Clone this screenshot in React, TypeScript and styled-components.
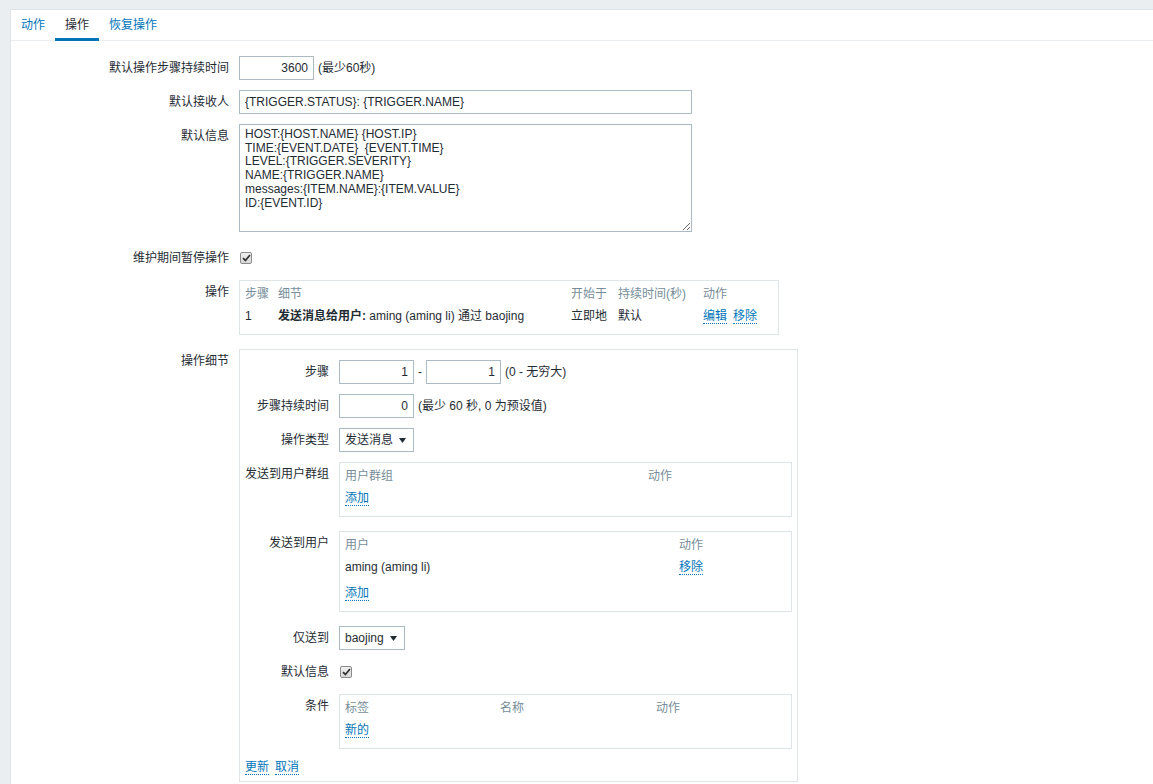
import React from 'react'
import styled, { createGlobalStyle } from 'styled-components'

const GlobalStyle = createGlobalStyle`
  body {
    margin: 0;
    background: #ebeef0;
    font-family: "Liberation Sans", Arial, "Noto Sans CJK SC", sans-serif;
    font-size: 12px;
    line-height: 14px;
    color: #1f2c33;
  }
`

const Panel = styled.div`
  margin: 9px 0 0 10px;
  min-height: 775px;
  background: #fff;
  border: 1px solid #dfe4e7;
  border-right: none;
  border-bottom: none;
  box-sizing: border-box;
`

const TabBar = styled.div`
  display: flex;
  height: 30px;
  border-bottom: 1px solid #ebeef0;
`

const Tab = styled.div<{ $active?: boolean }>`
  height: 31px;
  padding: 0 10px 1px;
  line-height: 30px;
  box-sizing: border-box;
  cursor: pointer;
  color: ${(p) => (p.$active ? '#1f2c33' : '#0275b8')};
  box-shadow: ${(p) => (p.$active ? 'inset 0 -3px 0 #0275b8' : 'none')};
`

const Form = styled.div`
  padding-top: 15px;
`

const FormRow = styled.div`
  display: flex;
  align-items: flex-start;
  margin-bottom: 10px;
`

const Label = styled.div<{ $width: number }>`
  flex: none;
  width: ${(p) => p.$width}px;
  padding: 5px 10px 0 0;
  box-sizing: border-box;
  text-align: right;
  white-space: nowrap;
`

const Field = styled.div<{ $tall?: boolean }>`
  display: flex;
  align-items: center;
  min-height: ${(p) => (p.$tall ? 24 : 0)}px;
`

const TextInput = styled.input<{ $width: number; $right?: boolean }>`
  width: ${(p) => p.$width}px;
  height: 24px;
  margin: 0;
  padding: 0 5px;
  box-sizing: border-box;
  border: 1px solid #acbbc2;
  background: #fff;
  font: inherit;
  color: #1f2c33;
  text-align: ${(p) => (p.$right ? 'right' : 'left')};
  outline: none;
`

const Hint = styled.span`
  margin-left: 4px;
  white-space: nowrap;
`

const Dash = styled.span`
  margin: 0 4px;
`

const TextArea = styled.textarea`
  display: block;
  width: 453px;
  height: 108px;
  margin: 0 0 4px;
  padding: 3px 5px;
  box-sizing: border-box;
  border: 1px solid #acbbc2;
  font-family: "Liberation Sans", Arial, sans-serif;
  font-size: 12px;
  line-height: 13.7px;
  color: #1f2c33;
  outline: none;
`

const CheckBox = styled.span`
  display: inline-flex;
  align-items: center;
  justify-content: center;
  width: 12px;
  height: 12px;
  margin-left: 1px;
  box-sizing: border-box;
  border: 1px solid #8a8a8a;
  border-radius: 2px;
  background: linear-gradient(#f0f0f0, #d8d8d8);
`

const ListBox = styled.div<{ $width: number; $flush?: boolean }>`
  width: ${(p) => p.$width}px;
  padding: 2px 5px 7px;
  margin-bottom: ${(p) => (p.$flush ? 0 : 4)}px;
  box-sizing: border-box;
  border: 1px solid #dfe4e7;
`

const Table = styled.table`
  width: 100%;
  border-collapse: collapse;
  table-layout: fixed;

  th,
  td {
    height: 22px;
    padding: 0;
    text-align: left;
    vertical-align: middle;
    white-space: nowrap;
  }

  th {
    font-weight: normal;
    color: #768d99;
  }
`

const Col = styled.col<{ $w?: number }>`
  width: ${(p) => (p.$w ? `${p.$w}px` : 'auto')};
`

const AddCell = styled.td`
  && {
    padding-top: 4px;
  }
`

const Link = styled.span<{ $gap?: boolean }>`
  color: #0275b8;
  border-bottom: 1px dotted #0275b8;
  cursor: pointer;
  margin-right: ${(p) => (p.$gap ? 6 : 0)}px;
`

const Select = styled.div<{ $width: number }>`
  display: inline-flex;
  align-items: center;
  justify-content: space-between;
  width: ${(p) => p.$width}px;
  height: 24px;
  padding: 0 7px 0 5px;
  box-sizing: border-box;
  border: 1px solid #acbbc2;
  background: #fff;
`

const DetailBox = styled.div`
  width: 559px;
  padding: 10px 5px 6px;
  box-sizing: border-box;
  border: 1px solid #dfe4e7;
`

const Actions = styled.div`
  display: flex;
  gap: 6px;
  padding-top: 1px;
`

const Arrow = () => (
  <svg width="7" height="5" viewBox="0 0 7 5">
    <polygon points="0,0 7,0 3.5,5" fill="#1f2c33" />
  </svg>
)

const Check = () => (
  <CheckBox>
    <svg width="9" height="8" viewBox="0 0 9 8">
      <path d="M1 4.2 L3.4 6.5 L8 1" fill="none" stroke="#333" strokeWidth="1.8" />
    </svg>
  </CheckBox>
)

const defaultMessage = [
  'HOST:{HOST.NAME} {HOST.IP}',
  'TIME:{EVENT.DATE}  {EVENT.TIME}',
  'LEVEL:{TRIGGER.SEVERITY}',
  'NAME:{TRIGGER.NAME}',
  'messages:{ITEM.NAME}:{ITEM.VALUE}',
  'ID:{EVENT.ID}',
].join('\n')

const OUTER = 228
const INNER = 94

export default function App() {
  return (
    <>
      <GlobalStyle />
      <Panel>
        <TabBar>
          <Tab>动作</Tab>
          <Tab $active>操作</Tab>
          <Tab>恢复操作</Tab>
        </TabBar>

        <Form>
          <FormRow>
            <Label $width={OUTER}>默认操作步骤持续时间</Label>
            <Field>
              <TextInput $width={75} $right defaultValue="3600" />
              <Hint>(最少60秒)</Hint>
            </Field>
          </FormRow>

          <FormRow>
            <Label $width={OUTER}>默认接收人</Label>
            <Field>
              <TextInput $width={453} defaultValue="{TRIGGER.STATUS}: {TRIGGER.NAME}" />
            </Field>
          </FormRow>

          <FormRow>
            <Label $width={OUTER}>默认信息</Label>
            <TextArea defaultValue={defaultMessage} />
          </FormRow>

          <FormRow>
            <Label $width={OUTER}>维护期间暂停操作</Label>
            <Field $tall>
              <Check />
            </Field>
          </FormRow>

          <FormRow>
            <Label $width={OUTER}>操作</Label>
            <ListBox $width={540}>
              <Table>
                <colgroup>
                  <Col $w={33} />
                  <Col $w={293} />
                  <Col $w={47} />
                  <Col $w={85} />
                  <Col />
                </colgroup>
                <thead>
                  <tr>
                    <th>步骤</th>
                    <th>细节</th>
                    <th>开始于</th>
                    <th>持续时间(秒)</th>
                    <th>动作</th>
                  </tr>
                </thead>
                <tbody>
                  <tr>
                    <td>1</td>
                    <td>
                      <b>发送消息给用户:</b> aming (aming li) 通过 baojing
                    </td>
                    <td>立即地</td>
                    <td>默认</td>
                    <td>
                      <Link $gap>编辑</Link>
                      <Link>移除</Link>
                    </td>
                  </tr>
                </tbody>
              </Table>
            </ListBox>
          </FormRow>

          <FormRow>
            <Label $width={OUTER}>操作细节</Label>
            <DetailBox>
              <FormRow>
                <Label $width={INNER}>步骤</Label>
                <Field>
                  <TextInput $width={75} $right defaultValue="1" />
                  <Dash>-</Dash>
                  <TextInput $width={75} $right defaultValue="1" />
                  <Hint>(0 - 无穷大)</Hint>
                </Field>
              </FormRow>

              <FormRow>
                <Label $width={INNER}>步骤持续时间</Label>
                <Field>
                  <TextInput $width={75} $right defaultValue="0" />
                  <Hint>(最少 60 秒, 0 为预设值)</Hint>
                </Field>
              </FormRow>

              <FormRow>
                <Label $width={INNER}>操作类型</Label>
                <Select $width={75}>
                  <span>发送消息</span>
                  <Arrow />
                </Select>
              </FormRow>

              <FormRow>
                <Label $width={INNER}>发送到用户群组</Label>
                <ListBox $width={453}>
                  <Table>
                    <colgroup>
                      <Col $w={303} />
                      <Col />
                    </colgroup>
                    <thead>
                      <tr>
                        <th>用户群组</th>
                        <th>动作</th>
                      </tr>
                    </thead>
                    <tbody>
                      <tr>
                        <td colSpan={2}>
                          <Link>添加</Link>
                        </td>
                      </tr>
                    </tbody>
                  </Table>
                </ListBox>
              </FormRow>

              <FormRow>
                <Label $width={INNER}>发送到用户</Label>
                <ListBox $width={453}>
                  <Table>
                    <colgroup>
                      <Col $w={334} />
                      <Col />
                    </colgroup>
                    <thead>
                      <tr>
                        <th>用户</th>
                        <th>动作</th>
                      </tr>
                    </thead>
                    <tbody>
                      <tr>
                        <td>aming (aming li)</td>
                        <td>
                          <Link>移除</Link>
                        </td>
                      </tr>
                      <tr>
                        <AddCell colSpan={2}>
                          <Link>添加</Link>
                        </AddCell>
                      </tr>
                    </tbody>
                  </Table>
                </ListBox>
              </FormRow>

              <FormRow>
                <Label $width={INNER}>仅送到</Label>
                <Select $width={66}>
                  <span>baojing</span>
                  <Arrow />
                </Select>
              </FormRow>

              <FormRow>
                <Label $width={INNER}>默认信息</Label>
                <Field $tall>
                  <Check />
                </Field>
              </FormRow>

              <FormRow>
                <Label $width={INNER}>条件</Label>
                <ListBox $width={453} $flush>
                  <Table>
                    <colgroup>
                      <Col $w={155} />
                      <Col $w={156} />
                      <Col />
                    </colgroup>
                    <thead>
                      <tr>
                        <th>标签</th>
                        <th>名称</th>
                        <th>动作</th>
                      </tr>
                    </thead>
                    <tbody>
                      <tr>
                        <td colSpan={3}>
                          <Link>新的</Link>
                        </td>
                      </tr>
                    </tbody>
                  </Table>
                </ListBox>
              </FormRow>

              <Actions>
                <Link>更新</Link>
                <Link>取消</Link>
              </Actions>
            </DetailBox>
          </FormRow>
        </Form>
      </Panel>
    </>
  )
}
